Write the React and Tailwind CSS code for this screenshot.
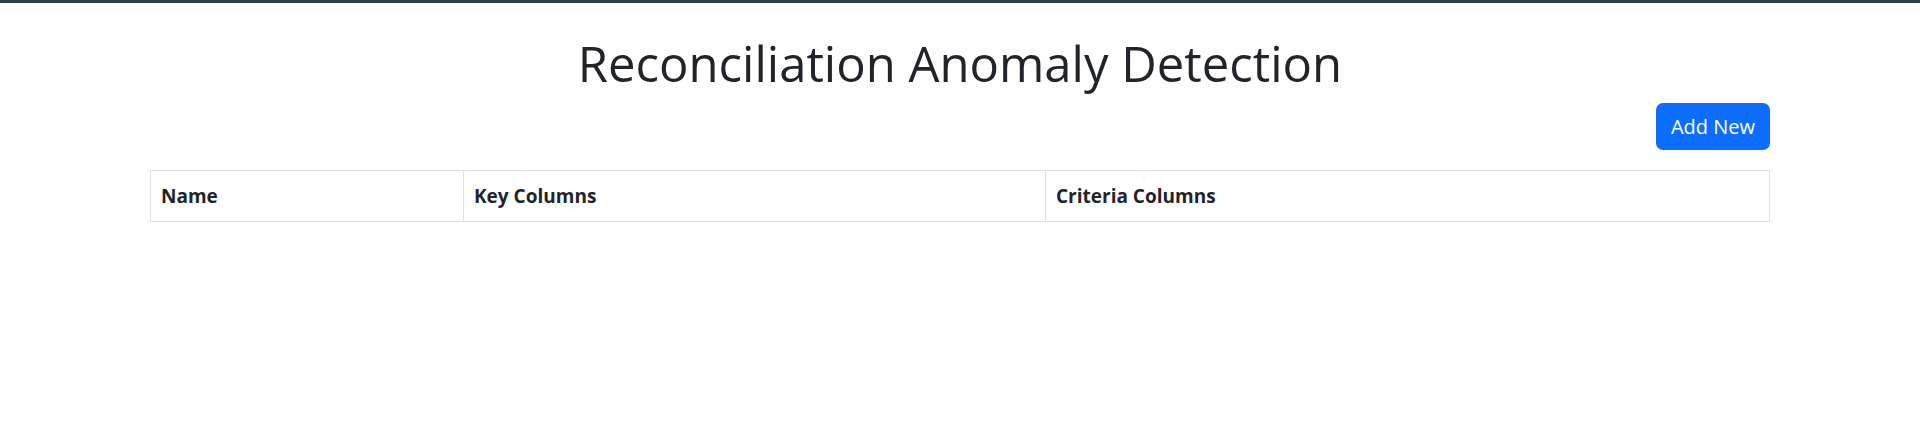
import React from 'react';

const columns = [
  { label: 'Name', width: 'w-[313px]' },
  { label: 'Key Columns', width: 'w-[582px]' },
  { label: 'Criteria Columns', width: '' },
];

const App = () => {
  return (
    <div className="min-h-screen bg-white border-t-[3px] border-[#2d3e45] text-[#212529] font-['Open_Sans',sans-serif]">
      <div className="w-[1620px] mx-auto">
        {/* Titulo */}
        <h1 className="pt-[30px] text-center text-[49px] leading-[60px] font-medium">
          Reconciliation Anomaly Detection
        </h1>

        <div className="flex justify-end mt-[10px]">
          <button className="h-[47px] px-[15px] rounded-[7px] bg-[#0d6efd] text-white text-[20px] leading-none">
            Add New
          </button>
        </div>

        {/* Tabla */}
        <table className="mt-[20px] w-full border-collapse border border-[#dee2e6]">
          <thead>
            <tr>
              {columns.map((col) => (
                <th
                  key={col.label}
                  className={`${col.width} border border-[#dee2e6] px-[10px] py-[10px] text-left text-[19px] leading-[30px] font-bold`}
                >
                  {col.label}
                </th>
              ))}
            </tr>
          </thead>
          <tbody></tbody>
        </table>
      </div>
    </div>
  );
};

export default App;
